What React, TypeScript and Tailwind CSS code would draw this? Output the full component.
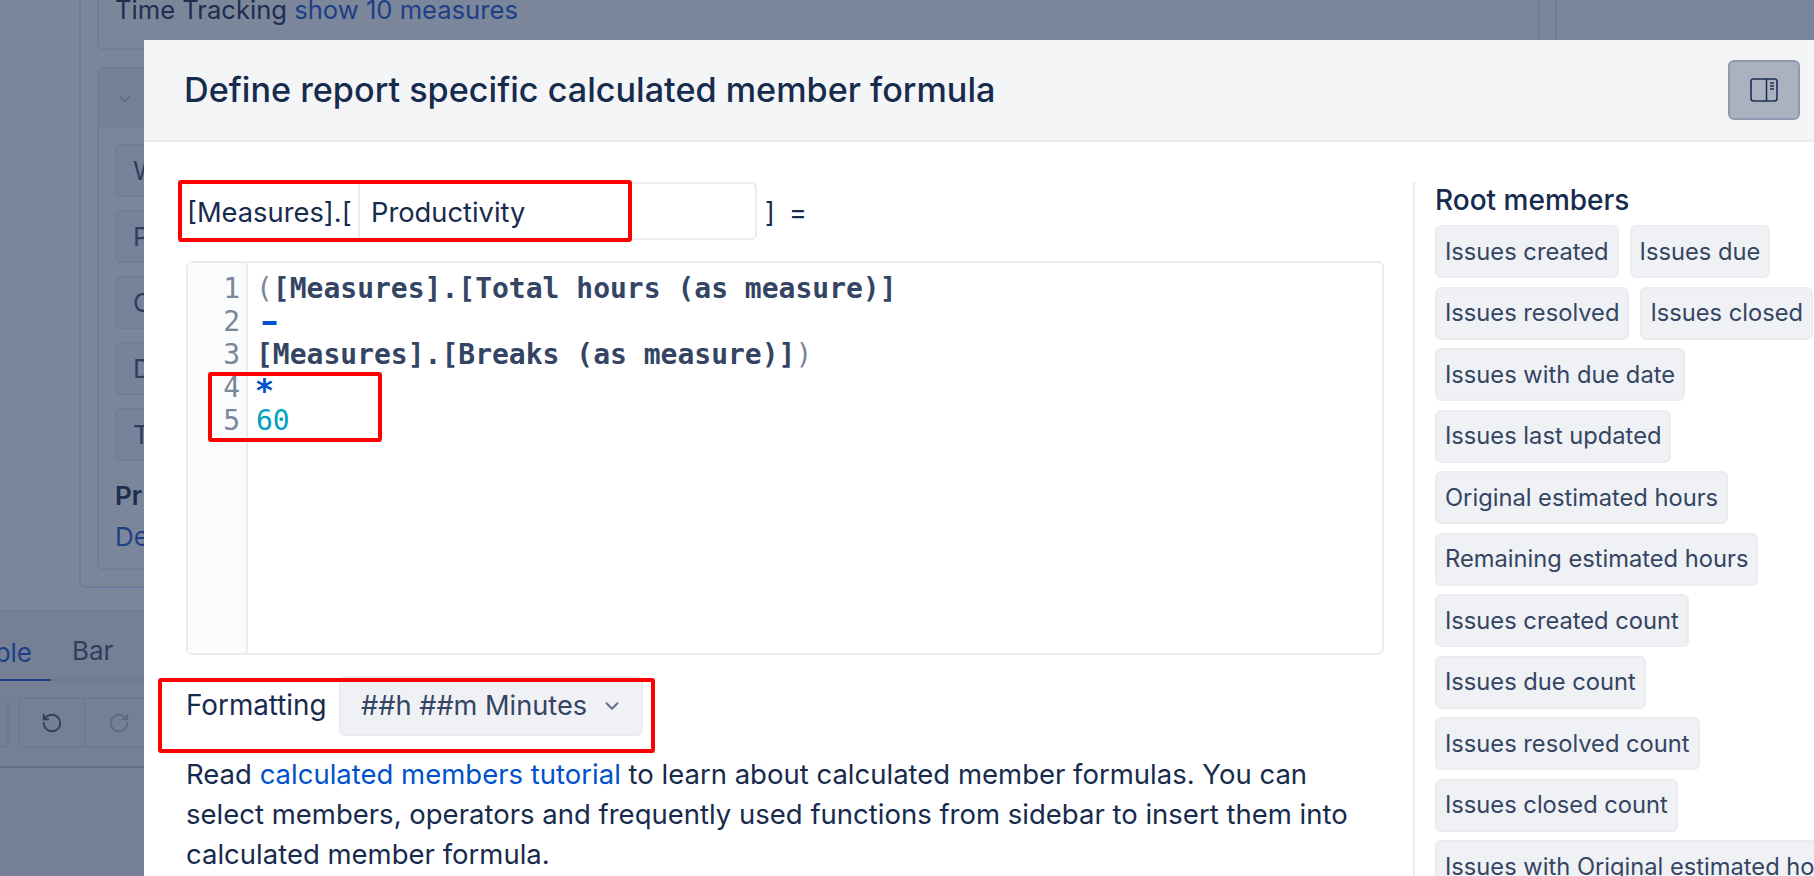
import React from "react";
import { ChevronDown, RotateCcw, RotateCw } from "lucide-react";

const rootMembers = [
  ["Issues created", "Issues due"],
  ["Issues resolved", "Issues closed"],
  ["Issues with due date"],
  ["Issues last updated"],
  ["Original estimated hours"],
  ["Remaining estimated hours"],
  ["Issues created count"],
  ["Issues due count"],
  ["Issues resolved count"],
  ["Issues closed count"],
  ["Issues with Original estimated hours"],
];

const behindRows = ["W", "P", "C", "D", "T"];

const font = "font-['Inter',sans-serif]";

const PanelIcon = () => (
  <svg width="28" height="25" viewBox="0 0 28 25" fill="none" stroke="#1e2f55" strokeWidth="1.6">
    <rect x="1" y="1" width="26" height="22" rx="2.5" />
    <path d="M16.5 1v22" />
    <path d="M20 5h4M20 8h4M20 11h4" />
  </svg>
);

const Behind = () => (
  <div className="h-full bg-[#7c869a] pl-[79px]">
    <div className="w-[1478px] border-x-2 border-b-2 rounded-b-md border-[#6a7d9f] h-[588px] pl-[16px]">
      <div className="w-[1443px] border-x-2 border-b-2 rounded-b-md border-[#747e93] h-[50px] pl-[16px] text-[25.6px] text-[#1e2d50] leading-[20px] whitespace-nowrap">
        Time Tracking <span className="text-[#1d3f86]">show 10 measures</span>
      </div>
      <div className="mt-[17px] w-[1443px] border-2 rounded-md border-[#747e93] h-[503px]">
        <div className="h-[59px] bg-[#778196] pl-[16px] flex items-center">
          <ChevronDown size={20} color="#5d6980" />
        </div>
        <div className="px-[16px] pt-[16px] flex flex-col gap-[13px]">
          {behindRows.map((r) => (
            <div key={r} className="h-[53px] w-[200px] border-2 border-[#747e93] bg-[#78829a] rounded-md pl-[16px] flex items-center text-[26px] text-[#2f3e5c]">
              {r}
            </div>
          ))}
        </div>
        <div className="px-[16px] mt-[14px] text-[26px] leading-[41px]">
          <div className="font-semibold text-[#1e2d50]">Pr</div>
          <div className="text-[#1d3f86]">De</div>
        </div>
      </div>
    </div>
  </div>
);

export default function App() {
  return (
    <div className={`relative h-screen w-full overflow-hidden ${font}`}>
      <div className="h-[610px]"><Behind /></div>
      <div className="h-[266px] bg-[#758096] border-t-2 border-dashed border-[#6f7a90]">
        <div className="flex items-end h-[69px] border-b-2 border-[#6f7a90] text-[26px] text-[#2f3e5c]">
          <div className="w-[51px] h-[56px] overflow-hidden border-b-2 border-[#1d3f86] -mb-[2px] pr-[19px] text-[#1d3f86] flex justify-end items-start leading-[55px] whitespace-nowrap">ble</div>
          <div className="ml-[21px] h-[56px] leading-[55px]">Bar</div>
        </div>
        <div className="flex gap-[9px] h-[51px] mt-[16px]">
          <div className="w-[9px] border-2 border-l-0 rounded-r-md border-[#6f7a90]" />
          <div className="w-[200px] border-2 rounded-md border-[#6f7a90] flex">
            <div className="w-[66px] border-r-2 border-[#6f7a90] flex items-center justify-center"><RotateCcw size={22} color="#2f3e5c" /></div>
            <div className="w-[66px] flex items-center justify-center"><RotateCw size={22} color="#5d6980" /></div>
          </div>
        </div>
        <div className="mt-[18px] h-[2px] bg-[#646f85]" />
      </div>

      <div className="absolute left-[144px] top-[40px] w-[1700px] h-[900px] rounded-tl-md bg-white text-[#172b4d]">
        <div className="h-[102px] bg-[#f4f5f7] border-b-2 border-[#ebecf0] pl-[40px] flex items-center relative">
          <h1 className="text-[34.2px] font-medium text-[#172b4d] whitespace-nowrap">Define report specific calculated member formula</h1>
          <button className="absolute left-[1584px] top-[20px] w-[72px] h-[60px] rounded-md bg-[#aab2c0] border-2 border-[#8f9ab0] flex items-center justify-center">
            <PanelIcon />
          </button>
        </div>
        <div className="flex">
          <div className="w-[1269px] shrink-0 pl-[42px] pr-[29px] pt-[40px]">
            <div className="flex items-center h-[58px]">
              <div className="w-[571px] h-[58px] border-2 border-[#ebecf0] border-l-0 rounded-md flex items-center text-[27.3px]">
                <div className="w-[174px] h-full pl-[1px] pt-[4px] flex items-center border-r-2 border-[#ebecf0] whitespace-nowrap">[Measures].[</div>
                <div className="pl-[11px] pt-[4px]">Productivity</div>
              </div>
              <div className="ml-[8px] pt-[4px] text-[27px] tracking-[0.12em] whitespace-pre">] =</div>
            </div>
            <div className="mt-[21px] h-[394px] border-2 border-[#ebecf0] rounded-md flex font-['DejaVu_Sans_Mono',monospace] text-[28px] leading-[33px]">
              <div className="w-[60px] shrink-0 bg-[#fafbfc] border-r-2 border-[#ebecf0] pr-[6px] pt-[9px] text-right text-[#7a869a]">
                <div>1</div><div>2</div><div>3</div><div>4</div><div>5</div>
              </div>
              <div className="pl-[8px] pt-[9px] text-[#344563]">
                <div><span className="text-[#7a869a]">(</span><b>[Measures].[Total hours (as measure)]</b></div>
                <div className="text-[#0052cc] font-bold"><span className="inline-block scale-x-[1.6] origin-left">-</span></div>
                <div><b>[Measures].[Breaks (as measure)]</b><span className="text-[#7a869a]">)</span></div>
                <div className="text-[#0052cc] font-bold"><span className="inline-block scale-115 translate-y-[3px]">*</span></div>
                <div className="text-[#00a3bf]">60</div>
              </div>
            </div>
            <div className="mt-[21px] flex items-center">
              <span className="text-[27.8px] w-[153px] shrink-0 whitespace-nowrap">Formatting</span>
              <div className="w-[304px] h-[60px] bg-[#f0f1f4] border-2 border-[#ebecf0] rounded-md flex items-center pl-[20px] text-[27.2px] text-[#344563] whitespace-nowrap">
                ##h ##m Minutes
                <ChevronDown size={22} className="ml-[14px]" color="#5e6c84" />
              </div>
            </div>
            <p className="mt-[18px] text-[27.5px] leading-[40px] w-[1190px]">
              Read <span className="text-[#0052cc]">calculated members tutorial</span> to learn about calculated member formulas. You can select members, operators and frequently used functions from sidebar to insert them into calculated member formula.
            </p>
          </div>
          <div className="mt-[40px] border-l-2 border-[#ebecf0] pl-[20px] pt-[2px] h-[800px]">
            <h2 className="text-[28px] font-medium leading-[32px] mb-[9px] whitespace-nowrap">Root members</h2>
            <div className="flex flex-col gap-[8.5px]">
              {rootMembers.map((row) => (
                <div key={row[0]} className="flex gap-[11px]">
                  {row.map((m) => (
                    <button key={m} className="h-[53px] px-[8px] bg-[#f0f1f4] border-2 border-[#ebecf0] rounded-md text-[23.7px] text-[#344563] whitespace-nowrap">
                      {m}
                    </button>
                  ))}
                </div>
              ))}
            </div>
          </div>
        </div>
      </div>

      <div className="absolute left-[178px] top-[180px] w-[454px] h-[62px] border-4 border-[#ff0000] rounded-[3px]" />
      <div className="absolute left-[208px] top-[372px] w-[174px] h-[70px] border-4 border-[#ff0000] rounded-[3px]" />
      <div className="absolute left-[158px] top-[678px] w-[497px] h-[75px] border-4 border-[#ff0000] rounded-[3px]" />
    </div>
  );
}
